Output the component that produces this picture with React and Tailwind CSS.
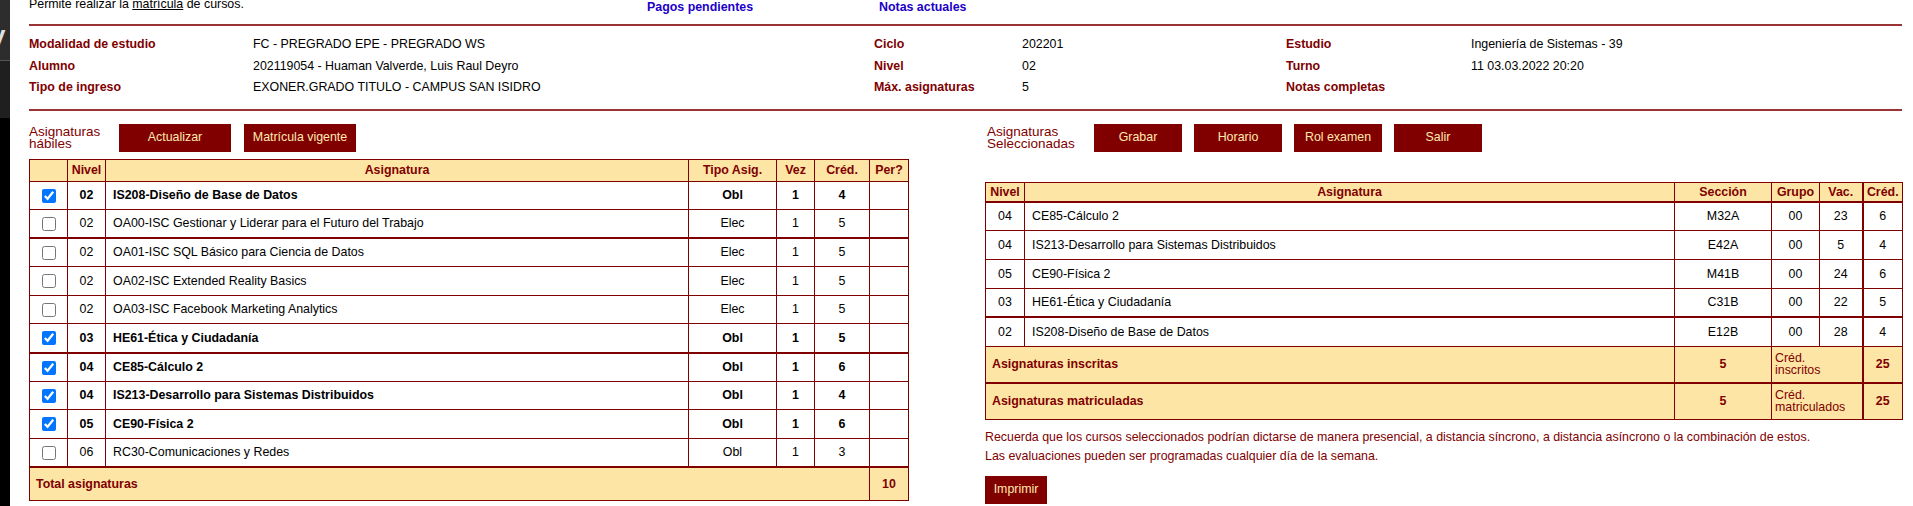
import React from 'react'

const maroon = 'text-[#800000]'

const leftRows = [
  { c: true, n: '02', a: 'IS208-Diseño de Base de Datos', t: 'Obl', v: '1', cr: '4', b: true },
  { c: false, n: '02', a: 'OA00-ISC Gestionar y Liderar para el Futuro del Trabajo', t: 'Elec', v: '1', cr: '5', thick: true },
  { c: false, n: '02', a: 'OA01-ISC SQL Básico para Ciencia de Datos', t: 'Elec', v: '1', cr: '5' },
  { c: false, n: '02', a: 'OA02-ISC Extended Reality Basics', t: 'Elec', v: '1', cr: '5' },
  { c: false, n: '02', a: 'OA03-ISC Facebook Marketing Analytics', t: 'Elec', v: '1', cr: '5' },
  { c: true, n: '03', a: 'HE61-Ética y Ciudadanía', t: 'Obl', v: '1', cr: '5', b: true, thick: true },
  { c: true, n: '04', a: 'CE85-Cálculo 2', t: 'Obl', v: '1', cr: '6', b: true },
  { c: true, n: '04', a: 'IS213-Desarrollo para Sistemas Distribuidos', t: 'Obl', v: '1', cr: '4', b: true },
  { c: true, n: '05', a: 'CE90-Física 2', t: 'Obl', v: '1', cr: '6', b: true },
  { c: false, n: '06', a: 'RC30-Comunicaciones y Redes', t: 'Obl', v: '1', cr: '3', thick: true },
]

const rightRows = [
  { n: '04', a: 'CE85-Cálculo 2', s: 'M32A', g: '00', v: '23', cr: '6' },
  { n: '04', a: 'IS213-Desarrollo para Sistemas Distribuidos', s: 'E42A', g: '00', v: '5', cr: '4' },
  { n: '05', a: 'CE90-Física 2', s: 'M41B', g: '00', v: '24', cr: '6' },
  { n: '03', a: 'HE61-Ética y Ciudadanía', s: 'C31B', g: '00', v: '22', cr: '5', thick: true },
  { n: '02', a: 'IS208-Diseño de Base de Datos', s: 'E12B', g: '00', v: '28', cr: '4' },
]

const info = [
  ['Modalidad de estudio', 'FC - PREGRADO EPE - PREGRADO WS', 'Ciclo', '202201', 'Estudio', 'Ingeniería de Sistemas - 39'],
  ['Alumno', '202119054 - Huaman Valverde, Luis Raul Deyro', 'Nivel', '02', 'Turno', '11 03.03.2022 20:20'],
  ['Tipo de ingreso', 'EXONER.GRADO TITULO - CAMPUS SAN ISIDRO', 'Máx. asignaturas', '5', 'Notas completas', ''],
]

const td = 'border border-[#800000] p-0'
const th = 'border border-[#800000] bg-[#fde6a5] p-0 font-bold text-[#800000] text-center'

function Btn({ children, w = 'w-[88px]' }) {
  return (
    <button className={`${w} h-[28px] bg-[#800000] text-[12.4px] text-[#ffe9b0]`}>{children}</button>
  )
}

function SideStrip() {
  return (
    <div className="flex w-[10px] shrink-0 flex-col">
      <div className="h-[60px] overflow-hidden bg-[#2d2d2d] pt-[22px]">
        <div className="-ml-[9px] text-[26px] font-bold leading-none text-[#e0e0e0]">y</div>
      </div>
      <div className="h-[1px] bg-[#555]" />
      <div className="h-[57px] bg-[#1f1f1f]" />
      <div className="flex-1 bg-black" />
    </div>
  )
}

function LeftTable() {
  return (
    <table className="w-[880px] table-fixed border-collapse text-[12.4px]">
      <colgroup>
        <col className="w-[38px]" />
        <col className="w-[38px]" />
        <col />
        <col className="w-[88px]" />
        <col className="w-[38px]" />
        <col className="w-[55px]" />
        <col className="w-[39px]" />
      </colgroup>
      <thead>
        <tr className="h-[22px]">
          <th className={th}></th>
          <th className={th}>Nivel</th>
          <th className={th}>Asignatura</th>
          <th className={th}>Tipo Asig.</th>
          <th className={th}>Vez</th>
          <th className={th}>Créd.</th>
          <th className={th}>Per?</th>
        </tr>
      </thead>
      <tbody>
        {leftRows.map((r, i) => (
          <tr key={i} className={`h-[28.6px] ${r.b ? 'font-bold' : ''} ${r.thick ? 'border-b-2 border-[#800000]' : ''}`}>
            <td className={`${td} text-center`}>
              <input type="checkbox" defaultChecked={r.c} className="m-0 h-[14px] w-[14px] align-middle" />
            </td>
            <td className={`${td} text-center`}>{r.n}</td>
            <td className={`${td} pl-[7px]`}>{r.a}</td>
            <td className={`${td} text-center`}>{r.t}</td>
            <td className={`${td} text-center`}>{r.v}</td>
            <td className={`${td} text-center`}>{r.cr}</td>
            <td className={td}></td>
          </tr>
        ))}
        <tr className="h-[34px] bg-[#fde6a5] font-bold text-[#800000]">
          <td colSpan={6} className={`${td} pl-[6px]`}>Total asignaturas</td>
          <td className={`${td} text-center`}>10</td>
        </tr>
      </tbody>
    </table>
  )
}

function RightTable() {
  return (
    <table className="w-[918px] table-fixed border-collapse text-[12.4px]">
      <colgroup>
        <col className="w-[39px]" />
        <col />
        <col className="w-[97px]" />
        <col className="w-[48px]" />
        <col className="w-[43px]" />
        <col className="w-[40px]" />
      </colgroup>
      <thead>
        <tr className="h-[20px] border-b-2 border-[#800000]">
          <th className={th}>Nivel</th>
          <th className={th}>Asignatura</th>
          <th className={th}>Sección</th>
          <th className={th}>Grupo</th>
          <th className={`${th} border-r-2`}>Vac.</th>
          <th className={th}>Créd.</th>
        </tr>
      </thead>
      <tbody>
        {rightRows.map((r, i) => (
          <tr key={i} className={`h-[28.8px] ${r.thick ? 'border-b-2 border-[#800000]' : ''}`}>
            <td className={`${td} text-center`}>{r.n}</td>
            <td className={`${td} pl-[7px]`}>{r.a}</td>
            <td className={`${td} text-center`}>{r.s}</td>
            <td className={`${td} text-center`}>{r.g}</td>
            <td className={`${td} border-r-2 text-center`}>{r.v}</td>
            <td className={`${td} text-center`}>{r.cr}</td>
          </tr>
        ))}
        {[
          ['Asignaturas inscritas', 'inscritos', true],
          ['Asignaturas matriculadas', 'matriculados', false],
        ].map(([label, sub, thick]) => (
          <tr key={label} className={`h-[36.5px] bg-[#fde6a5] text-[#800000] ${thick ? 'border-b-2 border-[#800000]' : ''}`}>
            <td colSpan={2} className={`${td} pl-[6px] font-bold`}>{label}</td>
            <td className={`${td} text-center font-bold`}>5</td>
            <td colSpan={2} className={`${td} border-r-2 pl-[3px] leading-[12px]`}>
              Créd.
              <br />
              {sub}
            </td>
            <td className={`${td} text-center font-bold`}>25</td>
          </tr>
        ))}
      </tbody>
    </table>
  )
}

export default function App() {
  return (
    <div className="flex h-[506px] overflow-hidden bg-white font-['Liberation_Sans',Arial,sans-serif] text-black">
      <SideStrip />
      <div className="ml-[19px] w-[1874px] shrink-0">
        <div className="flex h-[24px] items-start text-[12.4px] leading-[12px]">
          <div className="-mt-[2px] w-[618px]">
            Permite realizar la <span className="underline">matrícula</span> de cursos.
          </div>
          <div className="mt-[1px] w-[232px] font-bold text-[#2000c8]">Pagos pendientes</div>
          <div className="mt-[1px] font-bold text-[#2000c8]">Notas actuales</div>
        </div>
        <div className="h-[2px] w-[1873px] bg-[#9a3333]" />
        <div className="grid grid-cols-[224px_621px_148px_264px_185px_1fr] pt-[8px] pb-[10px] text-[12.4px] leading-[21.5px]">
          {info.map((row, i) => (
            <React.Fragment key={i}>
              <div className={`font-bold ${maroon}`}>{row[0]}</div>
              <div>{row[1]}</div>
              <div className={`font-bold ${maroon}`}>{row[2]}</div>
              <div>{row[3]}</div>
              <div className={`font-bold ${maroon}`}>{row[4]}</div>
              <div>{row[5]}</div>
            </React.Fragment>
          ))}
        </div>
        <div className="h-[2px] w-[1873px] bg-[#9a3333]" />
        <div className="flex pt-[13px]">
          <div className="w-[880px]">
            <div className="flex h-[28px] items-center">
              <div className={`w-[90px] text-[13.5px] leading-[12px] ${maroon}`}>
                Asignaturas
                <br />
                hábiles
              </div>
              <div className="flex gap-[13px]">
                <Btn w="w-[112px]">Actualizar</Btn>
                <Btn w="w-[112px]">Matrícula vigente</Btn>
              </div>
            </div>
            <div className="mt-[7px]">
              <LeftTable />
            </div>
          </div>
          <div className="ml-[76px] w-[918px]">
            <div className="flex h-[28px] items-center">
              <div className={`ml-[2px] w-[107px] text-[13.5px] leading-[12px] ${maroon}`}>
                Asignaturas
                <br />
                Seleccionadas
              </div>
              <div className="flex gap-[12px]">
                <Btn>Grabar</Btn>
                <Btn>Horario</Btn>
                <Btn>Rol examen</Btn>
                <Btn>Salir</Btn>
              </div>
            </div>
            <div className="mt-[30px]">
              <RightTable />
            </div>
            <div className={`mt-[8px] text-[12.4px] leading-[19px] ${maroon}`}>
              <p>
                Recuerda que los cursos seleccionados podrían dictarse de manera presencial, a distancia síncrono, a distancia asíncrono o la combinación de estos.
              </p>
              <p>Las evaluaciones pueden ser programadas cualquier día de la semana.</p>
            </div>
            <div className="mt-[10px]">
              <Btn w="w-[62px]">Imprimir</Btn>
            </div>
          </div>
        </div>
      </div>
    </div>
  )
}
